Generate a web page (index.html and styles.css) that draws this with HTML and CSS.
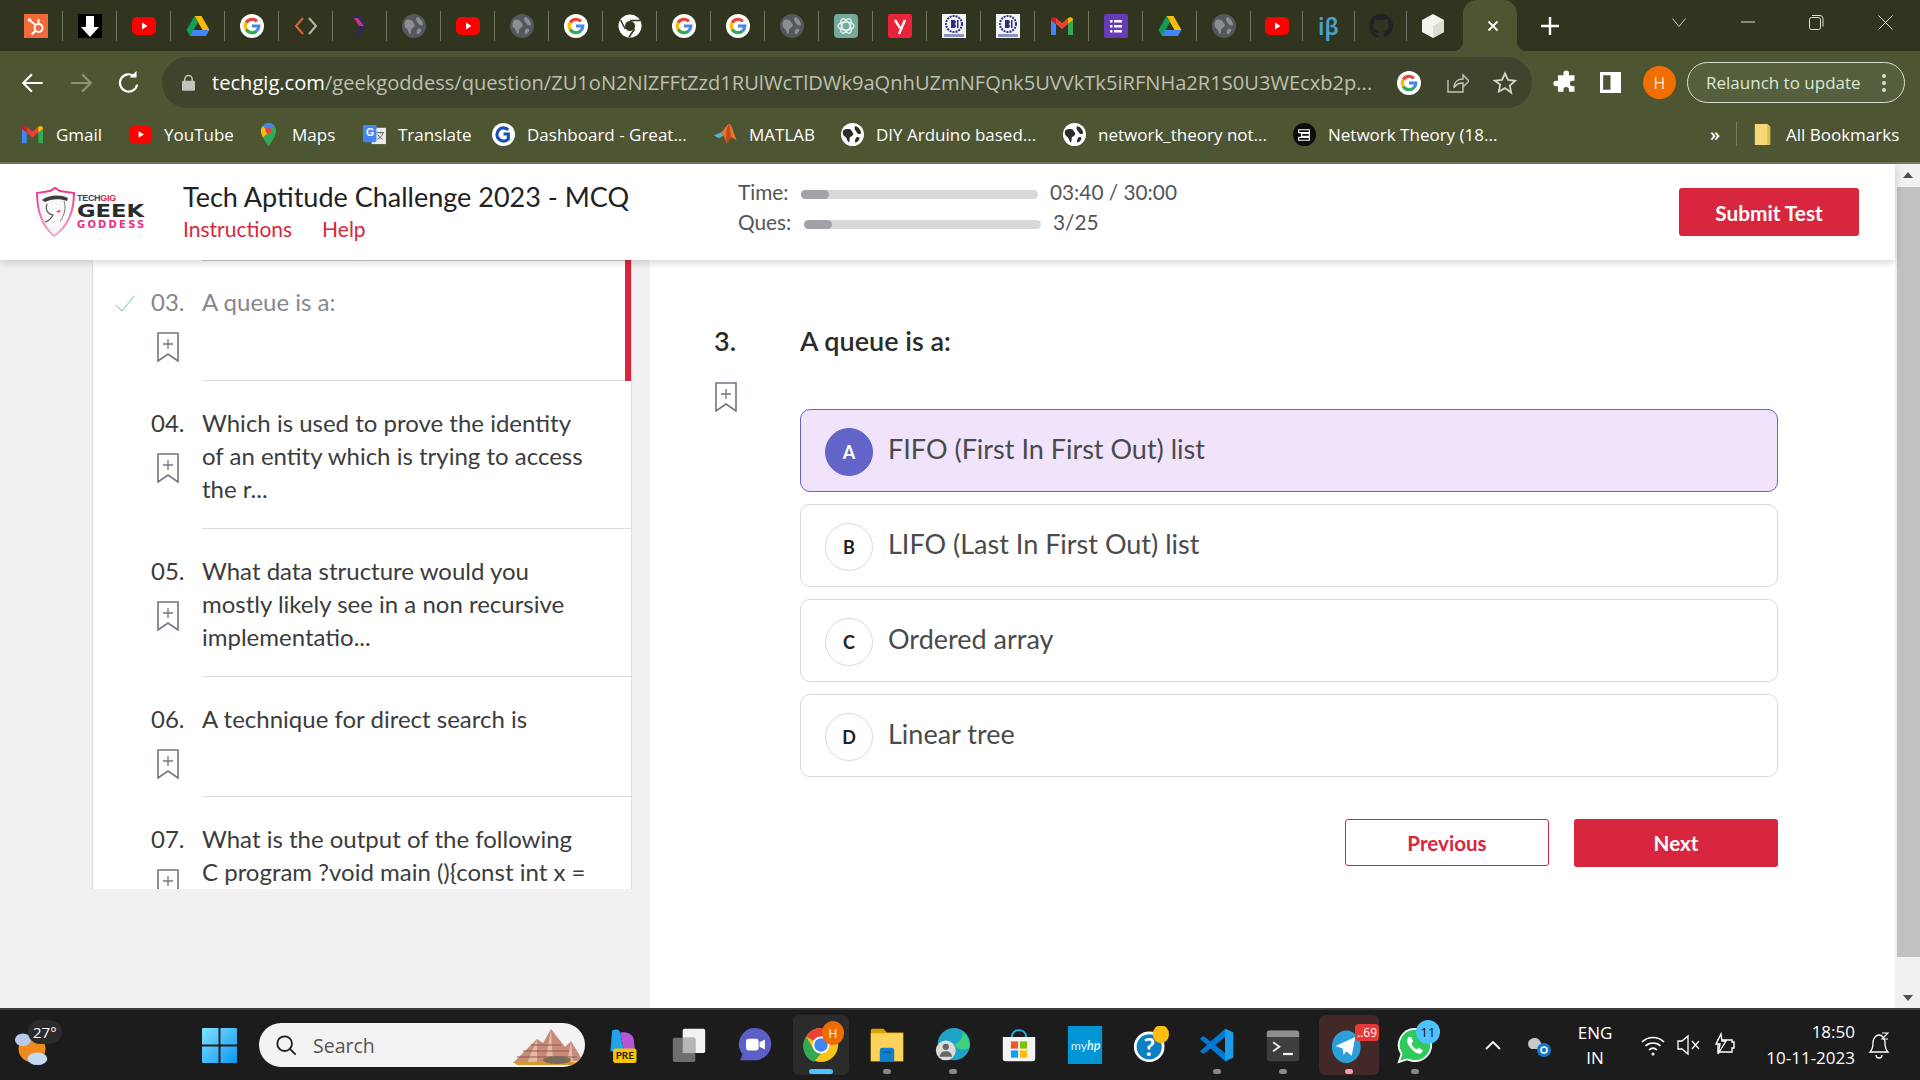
FILE: index.html
```html
<!DOCTYPE html>
<html lang="en">
<head>
  <meta charset="UTF-8" />
  <title>Tech Aptitude Challenge 2023 - MCQ</title>
  <link rel="stylesheet" href="styles.css">
</head>
<body>
  <svg class="defs" width="0" height="0">
    <symbol id="i-g" viewBox="0 0 24 24">
      <circle cx="12" cy="12" r="12" fill="#fff"/>
      <g fill="none" stroke-width="3.2">
        <path d="M6.2 8.6A6.8 6.8 0 0 1 16.9 7.3" stroke="#ea4335"/>
        <path d="M6.2 8.6A6.8 6.8 0 0 0 6.2 15.4" stroke="#fbbc05"/>
        <path d="M6.2 15.4A6.8 6.8 0 0 0 16.8 16.8" stroke="#34a853"/>
        <path d="M16.8 16.8A6.8 6.8 0 0 0 18.8 12H12" stroke="#4285f4"/>
      </g>
    </symbol>
    <symbol id="i-g2" viewBox="0 0 24 24">
      <circle cx="12" cy="12" r="12" fill="#fff"/>
      <path d="M17 7.2A6.9 6.9 0 1 0 17 16.8V11.5H12" fill="none" stroke="#1a4fb5" stroke-width="3.2"/>
    </symbol>
    <symbol id="i-yt" viewBox="0 0 24 24">
      <rect y="3" width="24" height="18" rx="5" fill="#f00"/>
      <path d="M10 8.5v7l5.5-3.5z" fill="#fff"/>
    </symbol>
    <symbol id="i-drive" viewBox="0 0 24 24">
      <path d="M8.5 2h7l8 14h-7z" fill="#fbbc04"/>
      <path d="M8.5 2 .5 16l3.6 6 8-14z" fill="#0f9d58"/>
      <path d="M7 16h16.500l-3.600 6H4.100z" fill="#4285f4"/>
    </symbol>
    <symbol id="i-globe" viewBox="0 0 24 24">
      <circle cx="12" cy="12" r="12" fill="#54585c"/>
      <path d="M4 6c3-1 6 0 7 2s3 3 1 5-3 1-3 4-1 4-2 2-1-4-3-5-2-5 0-8zM15 3c3 1 6 4 6 8-2 1-4 0-5-2s-3-3-1-6zM16 15c2-1 4 0 3 2s-3 4-4 3 0-4 1-5z" fill="#8b8f92"/>
    </symbol>
    <symbol id="i-globe-w" viewBox="0 0 24 24">
      <circle cx="12" cy="12" r="12" fill="#fff"/>
      <path d="M3 7c3-1 7-1 8 1s3 3 1 5-3 1-3 4-1 4-2 2-1-4-3-5-3-5-1-7zM15 3c3 1 6 4 6 8-2 1-4 0-5-2s-3-3-1-6zM16 15c2-1 4 0 3 2s-3 4-4 3 0-4 1-5z" fill="#2b2b2b"/>
    </symbol>
    <symbol id="i-gmail" viewBox="0 0 24 24">
      <path d="M1 6v15h5V10z" fill="#4285f4"/>
      <path d="M23 6v15h-5V10z" fill="#34a853"/>
      <path d="M6 10V4L12 9l6-5v6l-6 5z" fill="#ea4335"/>
      <path d="M1 6c0-3 3-3.500 5-2v6z" fill="#c5221f"/>
      <path d="M23 6c0-3-3-3.500-5-2v6z" fill="#fbbc04"/>
    </symbol>
    <symbol id="i-bi" viewBox="0 0 24 24">
      <rect width="24" height="24" fill="#f4f4f8"/>
      <circle cx="12" cy="10" r="8" fill="none" stroke="#27307f" stroke-width="2" stroke-dasharray="2 1"/>
      <path d="M9 6h3a2 2 0 0 1 0 4 2 2 0 0 1 0 4H9zM15 6h1.500v8H15z" fill="#27307f"/>
      <path d="M2 20h20v3H2z" fill="#8d93c4"/>
    </symbol>
  </svg>

  <div class="tabstrip">
    <div class="tab">
      <svg class="fav" viewBox="0 0 24 24"><rect width="24" height="24" fill="#f26a3c"/><circle cx="14.500" cy="14" r="4" fill="none" stroke="#fff" stroke-width="2"/><path d="M14.500 10V5M11.500 11 6 6.500M11.500 17l-4 3.500" stroke="#fff" stroke-width="2"/><circle cx="5.500" cy="6" r="1.800" fill="#fff"/></svg>
    </div>
    <div class="tab">
      <svg class="fav" viewBox="0 0 24 24"><rect width="24" height="24" fill="#000"/><path d="M8 2h8v11h5L12 23 3 13h5z" fill="#fff"/></svg>
    </div>
    <div class="tab"><svg class="fav"><use href="#i-yt"/></svg></div>
    <div class="tab"><svg class="fav"><use href="#i-drive"/></svg></div>
    <div class="tab"><svg class="fav"><use href="#i-g"/></svg></div>
    <div class="tab">
      <svg class="fav" viewBox="0 0 24 24" fill="none" stroke-width="2"><path d="M9 4 2 12l7 8" stroke="#d9683a"/><path d="m15 4 7 8-7 8" stroke="#b8b8a8"/></svg>
    </div>
    <div class="tab">
      <svg class="fav" viewBox="0 0 24 24"><path d="M6 2h5l7 10-7 10H6l7-10z" fill="#2c2a5c"/><path d="M6 4h4l6 8H11z" fill="#c2358f"/></svg>
    </div>
    <div class="tab"><svg class="fav"><use href="#i-globe"/></svg></div>
    <div class="tab"><svg class="fav"><use href="#i-yt"/></svg></div>
    <div class="tab"><svg class="fav"><use href="#i-globe"/></svg></div>
    <div class="tab"><svg class="fav"><use href="#i-g"/></svg></div>
    <div class="tab">
      <svg class="fav" viewBox="0 0 24 24"><circle cx="12" cy="12" r="11.500" fill="#fff"/><circle cx="12" cy="12" r="5.500" fill="#31351f" stroke="#fff" stroke-width="1"/><path d="M12 6.500h10M7.300 15 2.500 6M16.700 15 11 23" stroke="#31351f" stroke-width="1.500"/></svg>
    </div>
    <div class="tab"><svg class="fav"><use href="#i-g"/></svg></div>
    <div class="tab"><svg class="fav"><use href="#i-g"/></svg></div>
    <div class="tab"><svg class="fav"><use href="#i-globe"/></svg></div>
    <div class="tab">
      <svg class="fav" viewBox="0 0 24 24"><rect width="24" height="24" rx="4" fill="#74aa9c"/><g fill="none" stroke="#e8f2ef" stroke-width="1.300"><ellipse cx="12" cy="12" rx="8" ry="4"/><ellipse cx="12" cy="12" rx="8" ry="4" transform="rotate(60 12 12)"/><ellipse cx="12" cy="12" rx="8" ry="4" transform="rotate(120 12 12)"/></g></svg>
    </div>
    <div class="tab">
      <svg class="fav" viewBox="0 0 24 24"><rect width="24" height="24" rx="2" fill="#e9243a"/><path d="m7 6 5 8M17 6l-6 14" fill="none" stroke="#fff" stroke-width="2.400"/></svg>
    </div>
    <div class="tab"><svg class="fav"><use href="#i-bi"/></svg></div>
    <div class="tab"><svg class="fav"><use href="#i-bi"/></svg></div>
    <div class="tab"><svg class="fav"><use href="#i-gmail"/></svg></div>
    <div class="tab">
      <svg class="fav" viewBox="0 0 24 24"><rect width="24" height="24" rx="2" fill="#673ab7"/><path d="M6 6h2.500v2.500H6zM10 6h8v2.500h-8zM6 11h2.500v2.500H6zM10 11h8v2.500h-8zM6 16h2.500v2.500H6zM10 16h8v2.500h-8z" fill="#fff"/></svg>
    </div>
    <div class="tab"><svg class="fav"><use href="#i-drive"/></svg></div>
    <div class="tab"><svg class="fav"><use href="#i-globe"/></svg></div>
    <div class="tab tab-narrow"><svg class="fav"><use href="#i-yt"/></svg></div>
    <div class="tab tab-narrow"><span class="tab-ib">iβ</span></div>
    <div class="tab tab-narrow">
      <svg class="fav" viewBox="0 0 24 24"><path d="M12 0C5 0 0 5 0 12c0 5.300 3.400 9.800 8.200 11.400.6.100.8-.3.800-.6v-2.100c-3.300.7-4-1.600-4-1.600-.5-1.400-1.300-1.800-1.300-1.800-1.100-.7.100-.7.100-.7 1.200.1 1.800 1.200 1.800 1.200 1.100 1.800 2.800 1.300 3.500 1 .1-.8.400-1.300.8-1.600-2.700-.3-5.500-1.300-5.500-5.900 0-1.300.5-2.400 1.200-3.200-.1-.3-.5-1.500.1-3.200 0 0 1-.3 3.300 1.200a11.500 11.500 0 0 1 6 0c2.300-1.500 3.300-1.200 3.300-1.200.6 1.700.2 2.900.1 3.200.8.800 1.200 1.900 1.200 3.200 0 4.600-2.800 5.600-5.500 5.900.4.400.8 1.100.8 2.200v3.300c0 .3.200.7.800.6C20.600 21.800 24 17.300 24 12c0-7-5-12-12-12z" fill="#1f2326"/></svg>
    </div>
    <div class="tab tab-narrow tab-last">
      <svg class="fav" viewBox="0 0 24 24"><path d="m12 0 11 6v12l-11 6-11-6V6z" fill="#f4f4ee"/><path d="M12 12v12l11-6V6z" fill="#dcdcd2"/></svg>
    </div>
    <div class="tab-active">
      <svg width="12" height="12" viewBox="0 0 12 12"><path d="m1.500 1.500 9 9M10.500 1.500l-9 9" stroke="#fff" stroke-width="1.800"/></svg>
    </div>
    <div class="tab-new">
      <svg width="18" height="18" viewBox="0 0 18 18"><path d="M9 0v18M0 9h18" stroke="#fff" stroke-width="2.400"/></svg>
    </div>
    <div class="win-controls">
      <div class="win-btn"><svg width="14" height="9" viewBox="0 0 14 9"><path d="m.5.500 6.500 8 6.500-8" fill="none" stroke="#c9ccbd"/></svg></div>
      <div class="win-btn"><svg width="14" height="2" viewBox="0 0 14 2"><path d="M0 1h14" stroke="#dfe0d6"/></svg></div>
      <div class="win-btn"><svg width="15" height="15" viewBox="0 0 15 15" fill="none" stroke="#dfe0d6"><rect x=".5" y="2.500" width="11" height="12" rx="2"/><path d="M3 .5h8a3 3 0 0 1 3 3v8"/></svg></div>
      <div class="win-btn"><svg width="15" height="15" viewBox="0 0 15 15"><path d="m.5.500 14 14M14.500.500l-14 14" stroke="#e8e9e0"/></svg></div>
    </div>
  </div>

  <div class="toolbar">
    <svg class="tool-nav" viewBox="0 0 24 24" fill="none" stroke="#fff" stroke-width="2"><path d="M21 12H3M11 4l-8 8 8 8"/></svg>
    <svg class="tool-nav" viewBox="0 0 24 24" fill="none" stroke="#8d9279" stroke-width="2"><path d="M3 12h18M13 4l8 8-8 8"/></svg>
    <svg class="tool-nav" viewBox="0 0 24 24" fill="none" stroke="#fff" stroke-width="2"><path d="M19.500 13.500A8 8 0 1 1 17 6"/><path d="M12.500 7H19V1z" fill="#fff" stroke="none"/></svg>
    <div class="omnibox">
      <svg class="lock" viewBox="0 0 14 18"><path d="M3 8V5.500a4 4 0 0 1 8 0V8" fill="none" stroke="#c2c4b8" stroke-width="1.600"/><rect y="7" width="14" height="11" rx="1.500" fill="#c2c4b8"/></svg>
      <div class="url"><span class="url-host">techgig.com</span>/geekgoddess/question/ZU1oN2NlZFFtZzd1RUlWcTlDWk9aQnhUZmNFQnk5UVVkTk5iRFNHa2R1S0U3WEcxb2p...</div>
      <svg class="omni-g"><use href="#i-g"/></svg>
      <svg class="omni-icon" viewBox="0 0 24 24" fill="none" stroke="#c2c4b8" stroke-width="1.400"><path d="M3 9v12h15v-6M9 17c0-6 4-9 9-9V4l6 6-6 6v-4c-4 0-7 1-9 5z"/></svg>
      <svg class="omni-icon" viewBox="0 0 24 24" fill="none" stroke="#d3d5c9" stroke-width="1.800"><path d="m12 2.500 3 6.500 7 .8-5.200 4.800 1.400 7L12 17.100l-6.200 3.500 1.400-7L2 9.800 9 9z"/></svg>
    </div>
    <svg class="tool-ext" viewBox="0 0 24 24"><path d="M9 3a3 3 0 0 1 6 0v2h6v6h-2a3 3 0 0 0 0 6h2v6h-6v-2a3 3 0 0 0-6 0v2H3v-6H1a3 3 0 0 1 0-6h2V5h6z" fill="#fff" transform="translate(2 .5) scale(.85)"/></svg>
    <svg class="tool-side" viewBox="0 0 20 20"><path d="M0 0h20v20H0zM3 3v14h7V3z" fill="#fff" fill-rule="evenodd"/></svg>
    <div class="avatar">H</div>
    <div class="relaunch">
      <span>Relaunch to update</span>
      <svg width="4" height="20" viewBox="0 0 4 20"><circle cx="2" cy="3" r="2" fill="#d3e3d0"/><circle cx="2" cy="10" r="2" fill="#d3e3d0"/><circle cx="2" cy="17" r="2" fill="#d3e3d0"/></svg>
    </div>
  </div>

  <div class="bookmarks">
    <div class="bm bm-gmail"><svg><use href="#i-gmail"/></svg>Gmail</div>
    <div class="bm bm-yt"><svg><use href="#i-yt"/></svg>YouTube</div>
    <div class="bm bm-maps">
      <svg viewBox="0 0 24 24"><path d="M12 0a8 8 0 0 0-8 8c0 6 8 16 8 16s8-10 8-16a8 8 0 0 0-8-8z" fill="#34a853"/><path d="M6 3a8 8 0 0 1 6-3 8 8 0 0 1 6 2.700L12 10z" fill="#4285f4"/><path d="M4 8a8 8 0 0 1 2-5l6 7-6 5c-1-2-2-5-2-7z" fill="#fbbc04"/><circle cx="12" cy="8" r="3" fill="#ea4335"/></svg>
      Maps
    </div>
    <div class="bm bm-translate">
      <svg viewBox="0 0 24 24"><rect x="9" y="5" width="15" height="17" fill="#e8eaed"/><path d="M14 10h8M18 9v2M21 10c-1 4-4 6-6 7M15.500 12c1 2 3 4 5 5" fill="none" stroke="#5f6368"/><rect y="2" width="14" height="18" rx="1.500" fill="#4285f4"/><text x="3" y="14" class="bm-g-text">G</text></svg>
      Translate
    </div>
    <div class="bm bm-dash"><svg><use href="#i-g2"/></svg>Dashboard - Great...</div>
    <div class="bm bm-matlab">
      <svg viewBox="0 0 24 24"><path d="M0 13 7 10l3 3-5 3z" fill="#4db6d6"/><path d="M7 10c3-1 6-9 9-9 3 0 5 13 8 17-3-1-4-3-6-3-2 1-3 5-5 6-1-3-2-6-3-8z" fill="#e9762b"/><path d="M16 1c-3 3-4 10-3 20 2-1 3-5 5-6-1-5-1-11-2-14z" fill="#c4471f"/></svg>
      MATLAB
    </div>
    <div class="bm bm-diy"><svg><use href="#i-globe-w"/></svg>DIY Arduino based...</div>
    <div class="bm bm-nt"><svg><use href="#i-globe-w"/></svg>network_theory not...</div>
    <div class="bm bm-nt2">
      <svg viewBox="0 0 24 24"><circle cx="12" cy="12" r="12" fill="#0c0c0c"/><path d="M6 7h11v3H6zM9 11h8v3H9zM6 15h11v3H6z" fill="none" stroke="#fff" stroke-width="1.200"/></svg>
      Network Theory (18...
    </div>
    <div class="bm-more">»</div>
    <div class="bm-sep"></div>
    <div class="bm bm-all">
      <svg viewBox="0 0 24 24"><path d="M4 1h13l3 3v19H4z" fill="#f6d876"/><path d="M17 1v22h3V4z" fill="#e4b94a"/></svg>
      All Bookmarks
    </div>
  </div>

  <div class="page">
    <div class="app">
      <header class="app-header">
        <div class="logo">
          <svg class="logo-shield" viewBox="0 0 40 50">
            <defs><linearGradient id="shield" x1="0" y1="0" x2="0" y2="1"><stop offset="0" stop-color="#ec2f86"/><stop offset="1" stop-color="#f7a8cc"/></linearGradient></defs>
            <path d="M19 1 24 4 38 6C38 22 34 38 18 49 5 38 1 22 1 6L14 4z" fill="#fbf8f9" stroke="url(#shield)" stroke-width="2"/>
            <path d="M6 13c6-5 18-6 26-2l-1 3c-7-3-17-2-22 1z" fill="#3c3c3c"/>
            <path d="M11 17c-2 5 0 10 6 11-2 4-5 6-8 7" fill="none" stroke="#555" stroke-width="1.200"/>
            <path d="M28 14c2 6 1 14-4 20" fill="none" stroke="#777"/>
            <path d="M20 24l5-1-2 3z" fill="#ec2f86"/>
          </svg>
          <div class="logo-words">
            <div class="logo-tech">TECH<span>GIG</span></div>
            <div class="logo-geek">GEEK</div>
            <div class="logo-goddess">GODDESS</div>
          </div>
        </div>
        <div class="test-info">
          <div class="test-title">Tech Aptitude Challenge 2023 - MCQ</div>
          <div class="test-links"><a>Instructions</a><a>Help</a></div>
        </div>
        <div class="progress">
          <div class="progress-row">
            <span class="progress-label">Time:</span>
            <div class="bar"><div class="bar-fill" style="width: 12%"></div></div>
            <span class="progress-value">03:40 / 30:00</span>
          </div>
          <div class="progress-row">
            <span class="progress-label progress-label-q">Ques:</span>
            <div class="bar"><div class="bar-fill" style="width: 12%"></div></div>
            <span class="progress-value">3/25</span>
          </div>
        </div>
        <button class="btn-submit">Submit Test</button>
      </header>

      <div class="content">
        <aside class="side">
          <div class="qlist">
            <div class="qrow active done">
              <div class="qcheck">
                <svg width="20" height="18" viewBox="0 0 20 18"><path d="m1 10 6 6L19 1" fill="none" stroke="#5fd3a6"/></svg>
              </div>
              <div class="qnum">03.
                <svg class="bookmark"><use href="#i-bookmark"/></svg>
              </div>
              <div class="qtext">A queue is a:</div>
            </div>
            <div class="qrow">
              <div class="qcheck"></div>
              <div class="qnum">04.
                <svg class="bookmark"><use href="#i-bookmark"/></svg>
              </div>
              <div class="qtext">Which is used to prove the identity of an entity which is trying to access the r...</div>
            </div>
            <div class="qrow">
              <div class="qcheck"></div>
              <div class="qnum">05.
                <svg class="bookmark"><use href="#i-bookmark"/></svg>
              </div>
              <div class="qtext">What data structure would you mostly likely see in a non recursive implementatio...</div>
            </div>
            <div class="qrow">
              <div class="qcheck"></div>
              <div class="qnum">06.
                <svg class="bookmark"><use href="#i-bookmark"/></svg>
              </div>
              <div class="qtext">A technique for direct search is</div>
            </div>
            <div class="qrow">
              <div class="qcheck"></div>
              <div class="qnum">07.
                <svg class="bookmark"><use href="#i-bookmark"/></svg>
              </div>
              <div class="qtext">What is the output of the following C program ?void main (){const int x =</div>
            </div>
          </div>
        </aside>

        <main class="question">
          <div class="question-side">
            <div class="question-num">3.</div>
            <svg class="bookmark-main"><use href="#i-bookmark"/></svg>
          </div>
          <div class="question-body">
            <div class="question-text">A queue is a:</div>
            <div class="options">
              <div class="option selected"><span class="option-key">A</span>FIFO (First In First Out) list</div>
              <div class="option"><span class="option-key">B</span>LIFO (Last In First Out) list</div>
              <div class="option"><span class="option-key">C</span>Ordered array</div>
              <div class="option"><span class="option-key">D</span>Linear tree</div>
            </div>
            <div class="nav-btns">
              <button class="btn-prev">Previous</button>
              <button class="btn-next">Next</button>
            </div>
          </div>
        </main>
      </div>
    </div>

    <div class="scrollbar">
      <div class="scroll-up"></div>
      <div class="scroll-thumb"></div>
      <div class="scroll-down"></div>
    </div>
  </div>

  <svg class="defs" width="0" height="0">
    <symbol id="i-bookmark" viewBox="0 0 22 30">
      <path d="M1 1h20v28l-10-7-10 7z" fill="none" stroke="#6f7780" stroke-width="1.600"/>
      <path d="M11 7v10M6 12h10" stroke="#6f7780" stroke-width="1.300"/>
    </symbol>
  </svg>

  <footer class="taskbar">
    <div class="weather">
      <svg viewBox="0 0 40 44"><circle cx="20" cy="24" r="15" fill="#f08a1d"/><ellipse cx="10" cy="14" rx="9" ry="7" fill="#b6c9e8"/><ellipse cx="26" cy="35" rx="11" ry="7" fill="#c6d8f2"/></svg>
      <span class="weather-temp">27°</span>
    </div>
    <svg class="win-logo" viewBox="0 0 36 36">
      <defs><linearGradient id="wing" x1="0" y1="0" x2="1" y2="1"><stop offset="0" stop-color="#7fe3ff"/><stop offset="1" stop-color="#0d96f2"/></linearGradient></defs>
      <path d="M0 1a1 1 0 0 1 1-1h16v17H0zM19 0h16a1 1 0 0 1 1 1v16H19zM0 19h17v17H1a1 1 0 0 1-1-1zM19 19h17v16a1 1 0 0 1-1 1H19z" fill="url(#wing)"/>
    </svg>
    <div class="search">
      <svg class="search-icon" viewBox="0 0 24 24" fill="none" stroke="#1c1c1c" stroke-width="2"><circle cx="10.500" cy="10.500" r="8"/><path d="m16.500 16.500 6 6"/></svg>
      <span>Search</span>
      <svg class="search-art" viewBox="0 0 72 36">
        <path d="M0 34 24 10l6 4 8-14 14 18 6-6 12 20z" fill="#c98a77"/>
        <path d="M24 10 14 34h10zM38 0l-6 34h8zM58 12l-4 22h6z" fill="#e4b8a6"/>
        <path d="M4 28h60M10 22h46M18 16h30" stroke="#8f5948" stroke-width="1.200"/>
        <path d="M0 33h70l-4 3H4z" fill="#d29a2f"/>
        <ellipse cx="44" cy="31" rx="14" ry="4" fill="#7a6a5c"/>
      </svg>
    </div>
    <div class="apps">
      <div class="app-slot">
        <svg viewBox="0 0 40 40"><path d="M8 4c4-2 8-2 9 2l4 20c-5 3-11 3-15 0z" fill="#1fa2e8"/><path d="M17 6c8-1 14 2 15 8l1 10c-2 3-7 3-12 2z" fill="#b556d9"/><rect x="9" y="24" width="26" height="16" rx="2.500" fill="#f8c400"/><text x="22" y="36" class="pre-text">PRE</text></svg>
      </div>
      <div class="app-slot">
        <svg viewBox="0 0 40 40"><rect x="13" y="2" width="25" height="27" rx="2" fill="#f2f2f2"/><rect x="2" y="12" width="25" height="27" rx="2" fill="#6e6e6e"/><rect x="13" y="12" width="14" height="17" fill="#b5b5b5"/></svg>
      </div>
      <div class="app-slot">
        <svg viewBox="0 0 40 40"><path d="M20 1a18 18 0 0 1 0 36H5c-1 0-2-1 0-3l1-4A18 18 0 0 1 20 1z" fill="#5b5fc7"/><rect x="10" y="13" width="14" height="13" rx="3" fill="#fff"/><path d="m25 17 6-3v11l-6-3z" fill="#fff"/></svg>
      </div>
      <div class="app-slot app-chrome">
        <svg viewBox="0 0 40 40"><circle cx="20" cy="20" r="19" fill="#f5c518"/><path d="M20 1a19 19 0 0 1 16.500 9.500H20a9.500 9.500 0 0 0-8.200 4.700L3.500 10.500A19 19 0 0 1 20 1z" fill="#ea4335"/><path d="M3.500 10.500 12 25a9.500 9.500 0 0 0 8 4.500L12 39A19 19 0 0 1 3.500 10.500z" fill="#34a853"/><circle cx="20" cy="20" r="9.500" fill="#fff"/><circle cx="20" cy="20" r="7.500" fill="#4285f4"/></svg>
        <span class="chrome-badge">H</span>
        <i class="app-active"></i>
      </div>
      <div class="app-slot">
        <svg viewBox="0 0 40 40"><path d="M2 4a2 2 0 0 1 2-2h12l4 4h18v32H2z" fill="#d9a100"/><path d="M2 7h36v31H2z" fill="#fbd35a"/><path d="M12 26a3 3 0 0 1 3-3h10a3 3 0 0 1 3 3v12H12z" fill="#1180cc"/><path d="M15 28h10" stroke="#0a5d9c" stroke-width="2"/></svg>
        <i class="app-dot"></i>
      </div>
      <div class="app-slot">
        <svg viewBox="0 0 40 40"><circle cx="21" cy="19" r="18" fill="#1fa4c9"/><path d="M30 5a18 18 0 0 1 8 18c-8 4-15 1-16-4 6-3 10-7 8-14z" fill="#3ed17f"/><circle cx="12" cy="26" r="11" fill="#dcdcdc"/><circle cx="12" cy="22" r="3.500" fill="#666"/><path d="M5 33c1-5 4-6 7-6s6 1 7 6z" fill="#666"/></svg>
        <i class="app-dot"></i>
      </div>
      <div class="app-slot">
        <svg viewBox="0 0 40 40"><path d="M2 11h36v24a3 3 0 0 1-3 3H5a3 3 0 0 1-3-3z" fill="#f3f3f3"/><path d="M12 11c0-10 16-10 16 0" fill="none" stroke="#2bb3e8" stroke-width="2"/><path d="M11 16h8v8h-8z" fill="#f35325"/><path d="M21 16h8v8h-8z" fill="#81bc06"/><path d="M11 26h8v8h-8z" fill="#05a6f0"/><path d="M21 26h8v8h-8z" fill="#ffba08"/></svg>
      </div>
      <div class="app-slot">
        <svg viewBox="0 0 36 40"><rect width="36" height="40" fill="#0096d6"/><text x="3" y="25" class="myhp-text">my<tspan font-weight="700" font-style="italic">hp</tspan></text></svg>
      </div>
      <div class="app-slot">
        <svg viewBox="0 0 40 40"><circle cx="18" cy="22" r="17" fill="#fff"/><circle cx="18" cy="22" r="14" fill="#0a7fc2"/><text x="18" y="32" class="help-text">?</text><ellipse cx="31" cy="8" rx="9" ry="10" fill="#fdbf0f"/></svg>
      </div>
      <div class="app-slot">
        <svg viewBox="0 0 40 40"><path d="M29 2 38 6v28l-9 4L13 24l-8 6-4-3 8-7-8-7 4-3 8 6z" fill="#0078d4"/><path d="M29 11 18 20l11 9z" fill="#1c1c1c"/><path d="M29 2 38 6v28l-9 4z" fill="#1a9ee8"/></svg>
        <i class="app-dot"></i>
      </div>
      <div class="app-slot">
        <svg viewBox="0 0 40 40"><rect x="2" y="4" width="36" height="34" rx="3" fill="#3e3e3e"/><path d="M2 7a3 3 0 0 1 3-3h30a3 3 0 0 1 3 3v4H2z" fill="#8e8e8e"/><path d="m9 17 7 5-7 5" fill="none" stroke="#f2f2f2" stroke-width="2"/><path d="M20 30h11" stroke="#f2f2f2" stroke-width="2.500"/></svg>
        <i class="app-dot"></i>
      </div>
      <div class="app-slot app-telegram">
        <svg viewBox="0 0 40 40"><ellipse cx="17" cy="22" rx="16" ry="18" fill="#2a9fd8"/><path d="M5 21 27 11l-4 21-6-5-3 4-1-7z" fill="#fff"/></svg>
        <span class="tg-badge">..69</span>
        <i class="app-dot app-dot-pink"></i>
      </div>
      <div class="app-slot">
        <svg viewBox="0 0 40 40"><path d="M20 2a18 18 0 0 1 0 36c-3 0-6-1-9-2l-9 3 3-9A18 18 0 0 1 20 2z" fill="#2fca5c" stroke="#fff" stroke-width="2"/><path d="M13 11c-3 3-2 7 2 12s9 8 12 6l2-3-5-3-2 2c-3-1-5-4-6-7l2-2-2-5z" fill="#fff"/></svg>
        <span class="wa-badge">11</span>
        <i class="app-dot"></i>
      </div>
    </div>
    <div class="tray">
      <svg class="tray-caret" viewBox="0 0 16 10"><path d="m1 9 7-7 7 7" fill="none" stroke="#fff" stroke-width="1.800"/></svg>
      <svg class="tray-cloud" viewBox="0 0 24 24"><path d="M2 14a6 6 0 0 1 6-9c3 0 5 2 6 5l4 6H4z" fill="#c8c8c8"/><circle cx="17" cy="17" r="7" fill="#1478c8"/><circle cx="17" cy="17" r="3" fill="none" stroke="#fff" stroke-width="1.500"/></svg>
      <div class="tray-lang"><div>ENG</div><div>IN</div></div>
      <svg class="tray-wifi" viewBox="0 0 24 22" fill="none" stroke="#fff" stroke-width="1.700"><path d="M1 8c6-6 16-6 22 0M4.500 12c4-4 11-4 15 0M8 16c2.500-2.500 5.500-2.500 8 0"/><circle cx="12" cy="20" r="1.500" fill="#fff" stroke="none"/></svg>
      <svg class="tray-vol" viewBox="0 0 24 22" fill="none" stroke="#fff" stroke-width="1.300"><path d="M1 7h4l6-5v18l-6-5H1zM15 7l7 8M22 7l-7 8"/></svg>
      <svg class="tray-bat" viewBox="0 0 24 24" fill="none" stroke="#fff" stroke-width="1.400"><path d="M6 7h14v2h2v6h-2v4H6z"/><path d="M9 1 4 11h4l-2 10 8-13h-4z" fill="#1c1c1c"/></svg>
      <div class="tray-clock"><div>18:50</div><div>10-11-2023</div></div>
      <svg class="tray-bell" viewBox="0 0 24 30" fill="none" stroke="#fff" stroke-width="1.300"><path d="M3 22c2-2 3-4 3-9s3-8 6-8 6 3 6 8 1 7 3 9zM9 25a3 3 0 0 0 6 0"/><path d="M15 3h6l-6 6h6" stroke-width="1.100"/></svg>
    </div>
  </footer>
</body>
</html>
```

FILE: styles.css
```css
* {
  margin: 0;
  padding: 0;
  box-sizing: border-box;
}

html, body {
  width: 1920px;
  height: 1080px;
  overflow: hidden;
}

body {
  display: flex;
  flex-direction: column;
  font-family: 'Open Sans', 'Noto Sans', sans-serif;
  color: #fff;
}

.defs {
  position: absolute;
}

/* browser chrome */
.tabstrip {
  display: flex;
  align-items: center;
  height: 51px;
  padding-left: 9px;
  background: #31351f;
}

.tab {
  display: flex;
  align-items: center;
  justify-content: center;
  flex: none;
  width: 54px;
  height: 30px;
  border-right: 1px solid #70735f;
}

.tab-narrow {
  width: 52px;
}

.tab-last {
  border-right: none;
}

.fav {
  width: 24px;
  height: 24px;
}

.tab-ib {
  font-size: 23px;
  font-weight: 600;
  font-family: 'Noto Sans', sans-serif;
  color: #4aa3c7;
}

.tab-active {
  position: relative;
  display: flex;
  align-items: center;
  justify-content: center;
  width: 54px;
  height: 51px;
  margin-left: 4px;
  padding-left: 5px;
  background: #4d5533;
  border-radius: 14px 14px 0 0;
}

.tab-active::before,
.tab-active::after {
  content: '';
  position: absolute;
  bottom: 0;
  width: 10px;
  height: 10px;
}

.tab-active::before {
  left: -10px;
  background: radial-gradient(circle at 0 0, transparent 10px, #4d5533 10.5px);
}

.tab-active::after {
  right: -10px;
  background: radial-gradient(circle at 100% 0, transparent 10px, #4d5533 10.5px);
}

.tab-new {
  display: flex;
  margin-left: 24px;
}

.win-controls {
  display: flex;
  margin-left: auto;
}

.win-btn {
  display: flex;
  align-items: center;
  justify-content: center;
  width: 69px;
  height: 51px;
  padding-bottom: 7px;
}

.toolbar {
  display: flex;
  align-items: center;
  height: 63px;
  padding-left: 20px;
  background: #4d5533;
}

.tool-nav {
  width: 26px;
  height: 26px;
  margin-right: 22px;
}

.omnibox {
  display: flex;
  align-items: center;
  width: 1370px;
  height: 51px;
  margin-left: -2px;
  padding-left: 20px;
  background: #3f452c;
  border-radius: 26px;
}

.lock {
  width: 13px;
  height: 17px;
  margin-right: 17px;
}

.url {
  width: 1170px;
  font-size: 20.1px;
  color: #bdbfb0;
  white-space: nowrap;
  overflow: hidden;
}

.url-host {
  color: #fff;
}

.omni-g {
  width: 24px;
  height: 26px;
  margin-left: 15px;
}

.omni-icon {
  width: 24px;
  height: 24px;
  margin-left: 24px;
}

.tool-ext {
  width: 26px;
  height: 26px;
  margin-left: 21px;
}

.tool-side {
  width: 21px;
  height: 21px;
  margin-left: 21px;
}

.avatar {
  display: flex;
  align-items: center;
  justify-content: center;
  width: 33px;
  height: 33px;
  margin-left: 22px;
  background: #f06f00;
  border-radius: 50%;
  font-size: 16px;
  color: #ffe7cf;
}

.relaunch {
  display: flex;
  align-items: center;
  justify-content: space-between;
  width: 218px;
  height: 41px;
  margin-left: 11px;
  padding: 0 18px 0 18px;
  background: #565f3d;
  border: 1.500px solid #d3e3d0;
  border-radius: 21px;
  font-size: 17px;
  color: #d9e8d5;
}

.bookmarks {
  display: flex;
  align-items: center;
  height: 50px;
  padding: 0 0 8px 21px;
  background: #4d5533;
  border-bottom: 2px solid #747a5e;
  font-size: 17px;
}

.bm {
  display: flex;
  align-items: center;
  gap: 12px;
  flex: none;
  white-space: nowrap;
}

.bm svg {
  width: 23px;
  height: 23px;
}

.bm-gmail { width: 108px; }
.bm-yt { width: 128px; }
.bm-maps { width: 106px; }
.bm-translate { width: 129px; }
.bm-dash { width: 222px; }
.bm-matlab { width: 127px; }
.bm-diy { width: 222px; }
.bm-nt { width: 230px; }
.bm-nt2 { width: 417px; }

.bm-more {
  width: 26px;
  font-size: 18px;
  font-weight: 600;
}

.bm-sep {
  width: 1px;
  height: 24px;
  margin-right: 14px;
  background: #777c63;
}

/* page */
.page {
  display: flex;
  height: 844px;
  color: #333;
  font-family: Lato, sans-serif;
}

.app {
  display: flex;
  flex-direction: column;
  width: 1895px;
}

.app-header {
  position: relative;
  z-index: 2;
  display: flex;
  align-items: center;
  flex: none;
  height: 96px;
  padding-left: 36px;
  background: #fff;
  box-shadow: 0 2px 8px rgba(0, 0, 0, 0.18);
}

.logo {
  display: flex;
  align-items: center;
  width: 147px;
}

.logo-shield {
  width: 40px;
  height: 50px;
}

.logo-words {
  margin-left: 1px;
  text-align: left;
}

.logo-tech {
  font: 700 9px/9px 'Liberation Sans', sans-serif;
  letter-spacing: -0.3px;
  color: #2b4a80;
}

.logo-tech span {
  color: #e02b3c;
}

.logo-geek {
  font: 800 18px/16px 'DejaVu Sans', sans-serif;
  color: #2b2b2b;
  transform: scaleX(1.26);
  transform-origin: left;
}

.logo-goddess {
  font: 700 10px/11px 'DejaVu Sans', sans-serif;
  letter-spacing: 2.2px;
  color: #ec2f86;
}

.test-info {
  width: 555px;
}

.test-title {
  font-size: 27px;
  line-height: 36px;
  margin-top: -3px;
  color: #222;
}

.test-links {
  display: flex;
  gap: 30px;
  font-size: 21px;
  line-height: 28px;
  color: #d9263f;
}

.progress {
  width: 941px;
  padding-bottom: 5px;
  font-size: 20.8px;
  color: #555;
}

.progress-row {
  display: flex;
  align-items: center;
  height: 30px;
}

.progress-label,
.progress-value {
  padding-bottom: 6px;
}

.progress-label {
  width: 63px;
}

.progress-label-q {
  width: 66px;
}

.bar {
  width: 237px;
  height: 9px;
  margin-right: 12px;
  background: #d8d8d8;
  border-radius: 5px;
}

.bar-fill {
  height: 100%;
  background: #a3a1a8;
  border-radius: 5px;
}

button {
  font-family: Lato, sans-serif;
  font-weight: 700;
  cursor: pointer;
}

.btn-submit {
  width: 180px;
  height: 48px;
  background: #d9263f;
  border: none;
  border-radius: 3px;
  font-size: 20.8px;
  color: #fff;
}

.content {
  display: flex;
  flex: 1;
}

.side {
  flex: none;
  width: 650px;
  padding-left: 92px;
  background: #f1f1f1;
}

.qlist {
  width: 540px;
  height: 629px;
  overflow: hidden;
  background: #fff;
  border-left: 1px solid #ddd;
  border-right: 1px solid #ddd;
}

.qrow {
  display: flex;
  min-height: 120px;
  font-size: 24px;
  line-height: 33px;
  color: #3c3c3c;
}

.qrow.active {
  min-height: 121px;
  border-right: 6px solid #d9263f;
}

.qrow.active .qtext {
  padding-right: 35px;
  box-shadow: inset 0 1px 0 #ccc;
}

.qrow.done {
  color: #8a868e;
}

.qcheck {
  flex: none;
  width: 58px;
  padding: 27px 0 0 22px;
}

.qnum {
  flex: none;
  width: 51px;
  padding-top: 25px;
}

.bookmark {
  display: block;
  width: 22px;
  height: 30px;
  margin: 14px 0 0 6px;
}

.qtext {
  flex: 1;
  padding: 25px 41px 23px 0;
  border-bottom: 1px solid #ddd;
}

.question {
  display: flex;
  flex: 1;
  padding: 64px 0 0 64px;
  background: #fff;
}

.question-side {
  flex: none;
  width: 86px;
}

.question-num,
.question-text {
  font-size: 27px;
  font-weight: 600;
  line-height: 34px;
  color: #2b2b2b;
}

.bookmark-main {
  display: block;
  width: 22px;
  height: 30px;
  margin: 24px 0 0 1px;
}

.question-body {
  width: 978px;
}

.options {
  display: flex;
  flex-direction: column;
  gap: 12px;
  margin-top: 51px;
}

.option {
  display: flex;
  align-items: center;
  height: 83px;
  padding: 0 0 5px 24px;
  border: 1px solid #dadada;
  border-radius: 10px;
  font-size: 27px;
  color: #4a4a4a;
}

.option.selected {
  background: #f0e3fb;
  border-color: #6264c7;
}

.option-key {
  display: flex;
  align-items: center;
  justify-content: center;
  flex: none;
  width: 48px;
  height: 48px;
  margin: 8px 15px 0 0;
  background: #fff;
  border: 1px solid #dadada;
  border-radius: 50%;
  font-size: 18px;
  font-weight: 700;
  color: #222;
}

.selected .option-key {
  background: #6264c7;
  border-color: #6264c7;
  color: #fff;
}

.nav-btns {
  display: flex;
  justify-content: flex-end;
  align-items: flex-start;
  gap: 25px;
  margin-top: 42px;
}

.btn-prev,
.btn-next {
  width: 204px;
  height: 48px;
  border-radius: 3px;
  font-size: 20.6px;
}

.btn-prev {
  height: 47px;
  background: #fff;
  border: 1px solid #d9263f;
  color: #d9263f;
}

.btn-next {
  background: #d9263f;
  border: none;
  color: #fff;
}

.scrollbar {
  display: flex;
  flex-direction: column;
  align-items: flex-end;
  flex: none;
  width: 25px;
  background: #f1f1f1;
}

.scroll-up,
.scroll-down {
  flex: none;
  width: 23px;
  height: 23px;
  position: relative;
}

.scroll-up::after,
.scroll-down::after {
  content: '';
  position: absolute;
  left: 6px;
  top: 8px;
  border-left: 5.500px solid transparent;
  border-right: 5.500px solid transparent;
}

.scroll-up::after {
  border-bottom: 6px solid #505050;
}

.scroll-down {
  margin-top: auto;
  height: 51px;
}

.scroll-down::after {
  top: 38px;
  border-top: 6px solid #505050;
}

.scroll-thumb {
  flex: none;
  width: 23px;
  height: 770px;
  background: #c1c1c1;
}

/* taskbar */
.taskbar {
  display: flex;
  align-items: center;
  flex: none;
  height: 72px;
  background: #1c1c1c;
  border-top: 2px solid #3a3a3a;
  font-size: 19.5px;
}

.weather {
  position: relative;
  width: 70px;
  height: 50px;
  margin-left: 14px;
}

.weather svg {
  width: 36px;
  height: 42px;
  margin-top: 6px;
}

.weather-temp {
  position: absolute;
  left: 14px;
  top: 0;
  padding: 0 5px;
  background: #2b2b2b;
  border-radius: 12px;
  font-size: 15px;
  line-height: 24px;
}

.win-logo {
  width: 35px;
  height: 35px;
  margin-left: 118px;
}

.search {
  display: flex;
  align-items: center;
  width: 326px;
  height: 44px;
  margin-left: 22px;
  padding-left: 16px;
  background: #f3f3f3;
  border-radius: 22px;
  color: #555;
  overflow: hidden;
}

.search-icon {
  width: 22px;
  height: 24px;
  margin-right: 16px;
}

.search-art {
  width: 72px;
  height: 36px;
  margin: 4px 0 0 auto;
}

.apps {
  display: flex;
  margin-left: 5px;
}

.app-slot {
  position: relative;
  display: flex;
  align-items: center;
  justify-content: center;
  width: 66px;
  height: 60px;
  font-size: 18px;
}

.app-slot svg {
  width: 36px;
  height: 38px;
}

.app-chrome::before {
  content: '';
  position: absolute;
  left: 5px;
  right: 5px;
  top: 0;
  bottom: 0;
  background: #2b2b2b;
  border-radius: 6px;
}

.app-chrome svg {
  position: relative;
}

.app-telegram::before {
  content: '';
  position: absolute;
  left: 3px;
  right: 3px;
  top: 0;
  bottom: 0;
  background: #432828;
  border-radius: 6px;
}

.app-telegram svg {
  position: relative;
}

.app-dot,
.app-active {
  position: absolute;
  bottom: 1px;
  left: 50%;
  width: 8px;
  height: 5px;
  margin-left: -4px;
  background: #8a8a8a;
  border-radius: 3px;
}

.app-active {
  width: 24px;
  margin-left: -12px;
  background: #4cc2ff;
}

.app-dot-pink {
  background: #f5a0a8;
}

.chrome-badge {
  position: absolute;
  right: 10px;
  top: 6px;
  display: flex;
  align-items: center;
  justify-content: center;
  width: 22px;
  height: 24px;
  background: #ef6c00;
  border-radius: 50%;
  font-size: 12px;
}

.tg-badge {
  position: absolute;
  right: 3px;
  top: 9px;
  padding: 0 2px;
  background: #e53935;
  border-radius: 4px;
  font-size: 12px;
  line-height: 17px;
}

.wa-badge {
  position: absolute;
  right: 8px;
  top: 5px;
  display: flex;
  align-items: center;
  justify-content: center;
  width: 24px;
  height: 24px;
  background: #4cc2ff;
  border-radius: 50%;
  font-size: 13px;
  color: #111;
}

.pre-text {
  font: 700 11px Lato, sans-serif;
  text-anchor: middle;
  fill: #1c1c1c;
}

.myhp-text {
  font: 13px Lato, sans-serif;
  fill: #d5eefa;
}

.help-text {
  font: 700 28px Lato, sans-serif;
  text-anchor: middle;
  fill: #fff;
}

.bm-g-text {
  font: 700 11px 'Liberation Sans', sans-serif;
  fill: #fff;
}

.tray {
  display: flex;
  align-items: center;
  margin-left: 37px;
}

.tray-caret {
  width: 16px;
  height: 10px;
}

.tray-cloud {
  width: 24px;
  height: 24px;
  margin-left: 26px;
}

.tray-lang {
  width: 44px;
  margin-left: 22px;
  font-size: 17px;
  line-height: 25px;
  text-align: center;
}

.tray-wifi {
  width: 24px;
  height: 22px;
  margin-left: 24px;
}

.tray-vol {
  width: 24px;
  height: 22px;
  margin-left: 12px;
}

.tray-bat {
  width: 24px;
  height: 26px;
  margin-left: 11px;
}

.tray-clock {
  width: 119px;
  font-size: 17px;
  line-height: 26px;
  text-align: right;
}

.tray-bell {
  width: 24px;
  height: 30px;
  margin-left: 12px;
}
```
